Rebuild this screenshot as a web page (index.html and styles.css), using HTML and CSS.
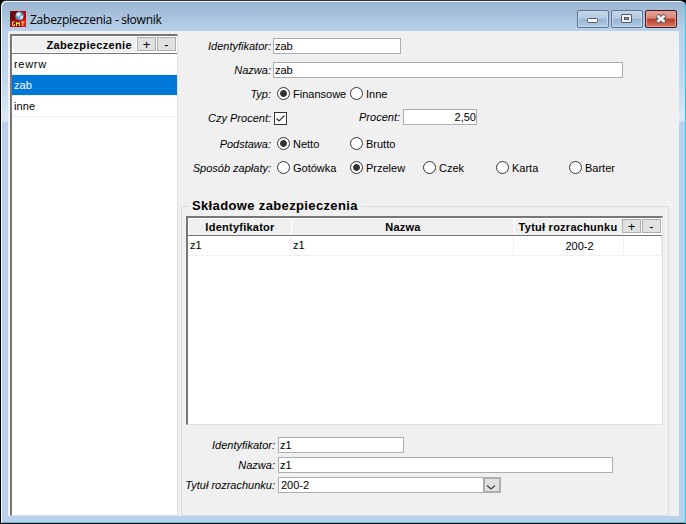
FILE: index.html
```html
<!DOCTYPE html>
<html lang="pl">
<head>
    <meta charset="UTF-8">
    <title>Zabezpieczenia - słownik</title>
    <link rel="stylesheet" href="styles.css">
</head>
<body>
<div class="window">
    <header class="titlebar">
        <svg class="app-icon" width="16" height="16" viewBox="0 0 16 16">
            <rect width="16" height="16" fill="#a90f12"/>
            <path d="M0 0h7L4 10H0z" fill="#74090c"/>
            <path d="M11 10l5-3v9h-5z" fill="#d5231c"/>
            <circle cx="9.5" cy="5" r="4.2" fill="#5e9cc9"/>
            <path d="M6 3l3-2 2 2-2 3-2-1zM10 6l3-2v3l-2 2z" fill="#d9edf7"/>
            <path d="M4.500 11H2.500v3.500h2v-1.500M6.500 15v-4l1.500 2 1.500-2v4M11 11h3.500M12.700 11v4" fill="none" stroke="#ffe45a"/>
        </svg>
        <h1>Zabezpieczenia - słownik</h1>
        <div class="controls">
            <button class="control">
                <svg width="30" height="16" viewBox="0 0 30 16"><rect x="9.500" y="7.500" width="10" height="4" rx="1" fill="#f4f4f4" stroke="#535666"/></svg>
            </button>
            <button class="control">
                <svg width="30" height="16" viewBox="0 0 30 16"><rect x="9.500" y="3.500" width="10" height="8" rx="0.500" fill="#f4f4f4" stroke="#535666"/><rect x="12.500" y="6.500" width="4" height="2" fill="#86a6cb" stroke="#535666"/></svg>
            </button>
            <button class="control close">
                <svg width="30" height="16" viewBox="0 0 30 16"><path d="M11 4.500l8 6.500M19 4.500L11 11" stroke="#535666" stroke-width="4.600"/><path d="M11.400 4.800l7.200 5.900M18.600 4.800l-7.200 5.900" stroke="#f4f4f4" stroke-width="2.700"/></svg>
            </button>
        </div>
    </header>

    <main class="content">
        <aside class="list">
            <div class="list-head">
                <span class="list-title">Zabezpieczenie</span>
                <button class="mini">+</button>
                <button class="mini">-</button>
            </div>
            <div class="list-row wide">rewrw</div>
            <div class="list-row selected">zab</div>
            <div class="list-row">inne</div>
        </aside>

        <section class="details">
            <form class="form">
                <div class="row">
                    <label>Identyfikator:</label>
                    <span class="field short">zab</span>
                </div>
                <div class="row">
                    <label>Nazwa:</label>
                    <span class="field long">zab</span>
                </div>
                <div class="row">
                    <label>Typ:</label>
                    <span class="radio checked">Finansowe</span>
                    <span class="radio">Inne</span>
                </div>
                <div class="row">
                    <label>Czy Procent:</label>
                    <svg class="checkbox" width="13" height="13" viewBox="0 0 13 13"><rect x="0.500" y="0.500" width="12" height="12" fill="#fff" stroke="#333"/><path d="M2.500 6.500L5 9l5.500-5.500" fill="none" stroke="#333" stroke-width="1.200"/></svg>
                    <label class="percent-label">Procent:</label>
                    <span class="field percent">2,50</span>
                </div>
                <div class="row base">
                    <label>Podstawa:</label>
                    <span class="radio checked">Netto</span>
                    <span class="radio">Brutto</span>
                </div>
                <div class="row">
                    <label>Sposób zapłaty:</label>
                    <span class="radio">Gotówka</span>
                    <span class="radio checked">Przelew</span>
                    <span class="radio">Czek</span>
                    <span class="radio">Karta</span>
                    <span class="radio">Barter</span>
                </div>
            </form>

            <fieldset class="group">
                <legend>Składowe zabezpieczenia</legend>
                <div class="table">
                    <div class="table-head">
                        <span>Identyfikator</span>
                        <span>Nazwa</span>
                        <span>Tytuł rozrachunku</span>
                        <div class="table-buttons">
                            <button class="mini">+</button>
                            <button class="mini">-</button>
                        </div>
                    </div>
                    <div class="table-row">
                        <span>z1</span>
                        <span>z1</span>
                        <span class="account">200-2</span>
                        <span></span>
                    </div>
                </div>
                <div class="subform">
                    <label>Identyfikator:</label>
                    <span class="field sub-short">z1</span>
                    <label>Nazwa:</label>
                    <span class="field sub-long">z1</span>
                    <label>Tytuł rozrachunku:</label>
                    <span class="field combo">200-2
                        <svg width="18" height="16" viewBox="0 0 18 16"><rect x="1" y="1" width="16" height="14" fill="#e1e1e1" stroke="#adadb3" stroke-width="2"/><path d="M4 8.500l4 3.500 4-3.500" fill="none" stroke="#444" stroke-width="1.300"/></svg>
                    </span>
                </div>
            </fieldset>
        </section>
    </main>
</div>
</body>
</html>
```

FILE: styles.css
```css
*,
*::before {
    box-sizing: border-box;
}

body {
    margin: 0;
    background: #000;
    font-family: "Liberation Sans", Arial, sans-serif;
    font-size: 11px;
    color: #000;
    overflow: hidden;
}

.window {
    width: 686px;
    height: 524px;
    padding: 0 6px 6px;
    border: 1px solid #000;
    border-top-color: #33333f;
    border-right: 1px solid #35c8e4;
    border-radius: 6px 6px 0 0;
    background: linear-gradient(#99b4d1, #b9d1ea 30px, #c2d7ee 80px, #dce8f5 120px, #b9d1ea 121px);
    box-shadow: inset 1px 1px 0 #f0f7fc, inset 0 -1px 0 #35c8e4;
}

.titlebar {
    display: flex;
    align-items: flex-start;
    height: 30px;
    padding: 9px 2px 0 3px;
}

.app-icon {
    margin-top: 1px;
}

.titlebar h1 {
    margin: 0 auto 0 4px;
    font: 12px/19px "Open Sans", "Noto Sans", sans-serif;
    letter-spacing: -0.25px;
}

.controls {
    display: flex;
    gap: 2px;
}

.control {
    width: 32px;
    height: 18px;
    padding: 0;
    border: 1px solid #60758f;
    border-radius: 2px;
    background: linear-gradient(#c3d6ea, #b5cce4 45%, #99b4d1 50%, #b4cce5);
    box-shadow: inset 0 0 0 1px #c5d9ec;
}

.control svg {
    display: block;
}

.close {
    border-color: #4c1521;
    background: linear-gradient(#e6a296, #d98577 45%, #b83b24 50%, #d37b62);
    box-shadow: inset 0 0 0 1px #dda197;
}

.content {
    display: flex;
    width: 671px;
    height: 485px;
    margin-left: 1px;
    padding: 3px 0 0 2px;
    background: #f0f0f0;
}

.list {
    width: 168px;
    height: 482px;
    border: 1px solid #e0e0e0;
    border-top: 2px solid #777;
    border-left: 2px solid #777;
    background: #fff;
}

.list-head {
    display: flex;
    align-items: flex-start;
    gap: 1px;
    height: 18px;
    padding: 1px 1px 0 1px;
    border-bottom: 1px solid #777;
}

.list-title {
    width: 123px;
    height: 15px;
    padding-right: 4px;
    background: #f0f0f0;
    font-weight: bold;
    line-height: 16px;
    text-align: right;
    letter-spacing: 0.35px;
}

.mini {
    width: 19px;
    height: 14px;
    padding: 0;
    border: 1px solid #adadad;
    background: #e1e1e1;
    font: 13px/11px "Liberation Sans", Arial, sans-serif;
}

.list-row {
    height: 21px;
    padding-left: 2px;
    border-bottom: 1px solid #f0f0f0;
    line-height: 20px;
    letter-spacing: 0.1px;
}

.wide {
    letter-spacing: 0.7px;
}

.selected {
    background: #0078d7;
    color: #fff;
}

.details {
    width: 488px;
    margin-left: 3px;
}

.form {
    display: flex;
    flex-direction: column;
    gap: 8px;
    padding-top: 4px;
}

.row {
    display: flex;
    align-items: center;
    height: 16px;
}

.base {
    margin-top: 2px;
}

label {
    width: 90px;
    font-style: italic;
    text-align: right;
    white-space: nowrap;
}

.row > label:first-child {
    margin-right: 2px;
}

.field {
    height: 16px;
    padding-left: 1px;
    border: 1px solid #abadb3;
    background: #fff;
    line-height: 14px;
}

.short {
    width: 128px;
}

.long {
    width: 350px;
}

.row .percent-label {
    width: 113px;
    padding-bottom: 2px;
}

.percent {
    width: 74px;
    margin: 0 0 2px 3px;
    text-align: right;
}

.checkbox {
    margin-left: 1px;
}

.radio {
    display: flex;
    align-items: center;
    gap: 3px;
    width: 73px;
    height: 15px;
    margin-bottom: 1px;
    white-space: nowrap;
}

.radio:nth-child(2) {
    margin-left: 4px;
}

.radio::before {
    content: "";
    flex: none;
    width: 13px;
    height: 13px;
    border: 1px solid #333;
    border-radius: 50%;
    background: #fff;
}

.radio.checked::before {
    background: radial-gradient(circle, #333 3px, #fff 3.8px);
}

.group {
    width: 488px;
    height: 318px;
    margin: 22px 0 0;
    padding: 0 4px;
    border: 1px solid #dcdcdc;
}

.group legend {
    padding: 0 3px;
    margin-left: 3px;
    font-size: 13px;
    font-weight: bold;
    line-height: 16px;
    letter-spacing: 0.36px;
}

.table {
    width: 477px;
    height: 209px;
    margin-top: 2px;
    border: 1px solid #e0e0e0;
    border-top: 2px solid #777;
    border-left: 2px solid #777;
    background: #fff;
}

.table-head,
.table-row {
    display: grid;
    grid-template-columns: 103px 223px 110px 38px;
}

.table-head {
    height: 18px;
    padding-top: 1px;
    border-bottom: 1px solid #777;
    font-weight: bold;
    line-height: 16px;
    text-align: center;
    letter-spacing: 0.25px;
}

.table-head span {
    margin-left: 1px;
    background: #f0f0f0;
    white-space: nowrap;
}

.table-head span:nth-child(3) {
    padding-right: 3px;
}

.table-buttons {
    display: flex;
    gap: 1px;
    margin-left: -2px;
}

.table-row {
    height: 20px;
    border-bottom: 1px solid #f0f0f0;
    line-height: 18px;
}

.table-row span {
    padding-left: 2px;
    border-right: 1px solid #f0f0f0;
}

.table-row .account {
    padding-left: 22px;
    text-align: center;
    line-height: 20px;
}

.subform {
    display: grid;
    grid-template-columns: 90px 335px;
    column-gap: 2px;
    row-gap: 4px;
    margin-top: 12px;
    line-height: 16px;
}

.subform label {
    width: 92px;
    margin-left: -2px;
    padding-right: 1px;
}

.sub-short {
    width: 126px;
}

.combo {
    display: flex;
    justify-content: space-between;
    width: 223px;
    padding-left: 2px;
}

.combo svg {
    flex: none;
    margin: -1px;
}
```
